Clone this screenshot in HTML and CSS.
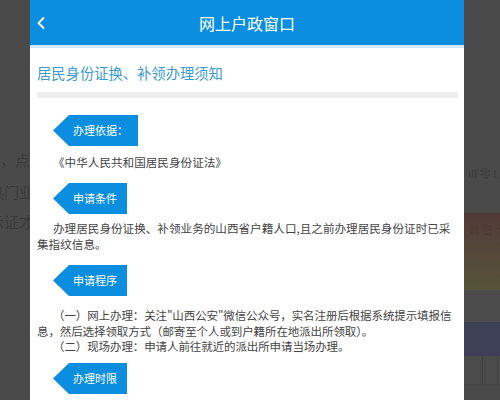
FILE: index.html
```html
<!DOCTYPE html>
<html lang="zh-CN">
<head>
  <meta charset="utf-8">
  <link rel="stylesheet" href="styles.css">
</head>
<body>
  <div class="screen">
    <!-- dimmed page behind the popup, left edge -->
    <div class="behind behind-left">
      <span class="ghost ghost-1">，点</span>
      <span class="ghost ghost-2">热门业</span>
      <span class="ghost ghost-3">示证才</span>
    </div>

    <div class="panel">
      <div class="topbar">
        <span class="back">
          <svg width="10" height="12" viewBox="0 0 10 12"><path d="M7.5 1 L2.5 6 L7.5 11" fill="none" stroke="#fff" stroke-width="1.8" stroke-linecap="round" stroke-linejoin="round"/></svg>
        </span>
        <span class="title">网上户政窗口</span>
        <span></span>
      </div>

      <div class="content">
        <h1 class="notice-title">居民身份证换、补领办理须知</h1>
        <div class="divider"></div>

        <div class="tag tag-first">办理依据：</div>
        <p class="law">《中华人民共和国居民身份证法》</p>

        <div class="tag tag-cond">申请条件</div>
        <p class="para">办理居民身份证换、补领业务的山西省户籍人口,且之前办理居民身份证时已采集指纹信息。</p>

        <div class="tag tag-proc">申请程序</div>
        <div class="steps">
          <p>（一）网上办理：关注"山西公安"微信公众号，实名注册后根据系统提示填报信息，然后选择领取方式（邮寄至个人或到户籍所在地派出所领取）。</p>
          <p>（二）现场办理：申请人前往就近的派出所申请当场办理。</p>
        </div>

        <div class="tag tag-time">办理时限</div>
      </div>
    </div>

    <!-- dimmed page behind the popup, right edge -->
    <div class="behind behind-right">
      <div class="r-top"><span class="ghost">ill 零 Lal</span></div>
      <div class="r-banner"><span class="ghost">训 密 卡</span></div>
      <div class="r-gap"></div>
      <div class="r-purple"></div>
      <div class="r-table"><span></span><span></span></div>
      <div class="r-rest"></div>
    </div>
  </div>
</body>
</html>
```

FILE: styles.css
```css
body {
  margin: 0;
  font-family: "Noto Sans CJK SC", "Noto Sans", sans-serif;
  background: #4a4a4a;
}

.screen {
  display: grid;
  grid-template-columns: 30px 434px 36px;
  width: 500px;
  height: 400px;
  overflow: hidden;
}

/* stuff showing through the dark overlay */
.behind {
  background: #4a4a4a;
  overflow: hidden;
  display: flex;
  flex-direction: column;
}

.ghost {
  color: #3a3a3a;
  font-size: 15px;
  white-space: nowrap;
  line-height: 20px;
}

.behind-left {
  align-items: flex-end;
}

.ghost-1 { margin-top: 150px; }
.ghost-2 { margin-top: 12px; margin-right: -4px; }
.ghost-3 { margin-top: 10px; margin-right: -4px; }

.behind-right .ghost {
  font-size: 11px;
  color: #3c3c3c;
  padding-left: 4px;
}

.r-top {
  height: 213px;
  display: flex;
  align-items: flex-end;
}

.r-top .ghost {
  margin-bottom: 30px;
}

.r-banner {
  height: 77px;
  background: linear-gradient(180deg, #523a37 0%, #55473a 45%, #565439 100%);
}

.r-banner .ghost {
  color: #4a3a36;
  display: block;
  margin-top: 6px;
}

.r-gap {
  height: 32px;
  background: #4c4c4c;
}

.r-purple {
  height: 34px;
  background: #3e4058;
}

.r-table {
  height: 28px;
  background: #4b4b4b;
  display: flex;
  gap: 14px;
  padding-left: 18px;
  border-bottom: 1px solid #444;
}

.r-table span {
  width: 1px;
  background: #414141;
}

.r-rest {
  flex: 1;
  background: #4a4a4a;
}

/* the popup */
.panel {
  background: #fff;
  display: flex;
  flex-direction: column;
}

.topbar {
  height: 45px;
  background: #0b8de0;
  border-bottom: 3px solid #d3e8f6;
  display: grid;
  grid-template-columns: 40px 1fr 40px;
  align-items: center;
  color: #fff;
}

.back {
  padding-left: 6px;
  display: flex;
  align-items: center;
  padding-top: 1px;
}

.title {
  text-align: center;
  font-size: 16px;
}

.content {
  padding: 0 6px 0 7px;
  display: flex;
  flex-direction: column;
  color: #444;
}

.notice-title {
  margin: 15px 0 0;
  font-size: 14.3px;
  line-height: 20px;
  font-weight: normal;
  color: #3b9ad0;
}

.divider {
  height: 6px;
  margin-top: 9px;
  background: #eeeeee;
}

.tag {
  align-self: flex-start;
  margin-left: 16px;
  height: 31px;
  line-height: 31px;
  padding: 0 10px 0 20px;
  background: #0b8de0;
  color: #fff;
  font-size: 11px;
  clip-path: polygon(16px 0, 100% 0, 100% 100%, 16px 100%, 0 50%);
}

.tag-first { margin-top: 17px; }
.tag-cond { margin-top: 13px; }
.tag-proc { margin-top: 13px; }
.tag-time { margin-top: 8.5px; }

.law,
.para,
.steps p {
  margin: 0;
  font-size: 11.6px;
  text-indent: 16px;
}

.law {
  margin-top: 8px;
  line-height: 16px;
}

.para {
  margin-top: 6px;
  line-height: 16px;
}

.steps {
  margin-top: 12px;
  padding-right: 6.5px;
}

.steps p {
  font-size: 11.5px;
  letter-spacing: -0.1px;
  line-height: 15.5px;
}
```
